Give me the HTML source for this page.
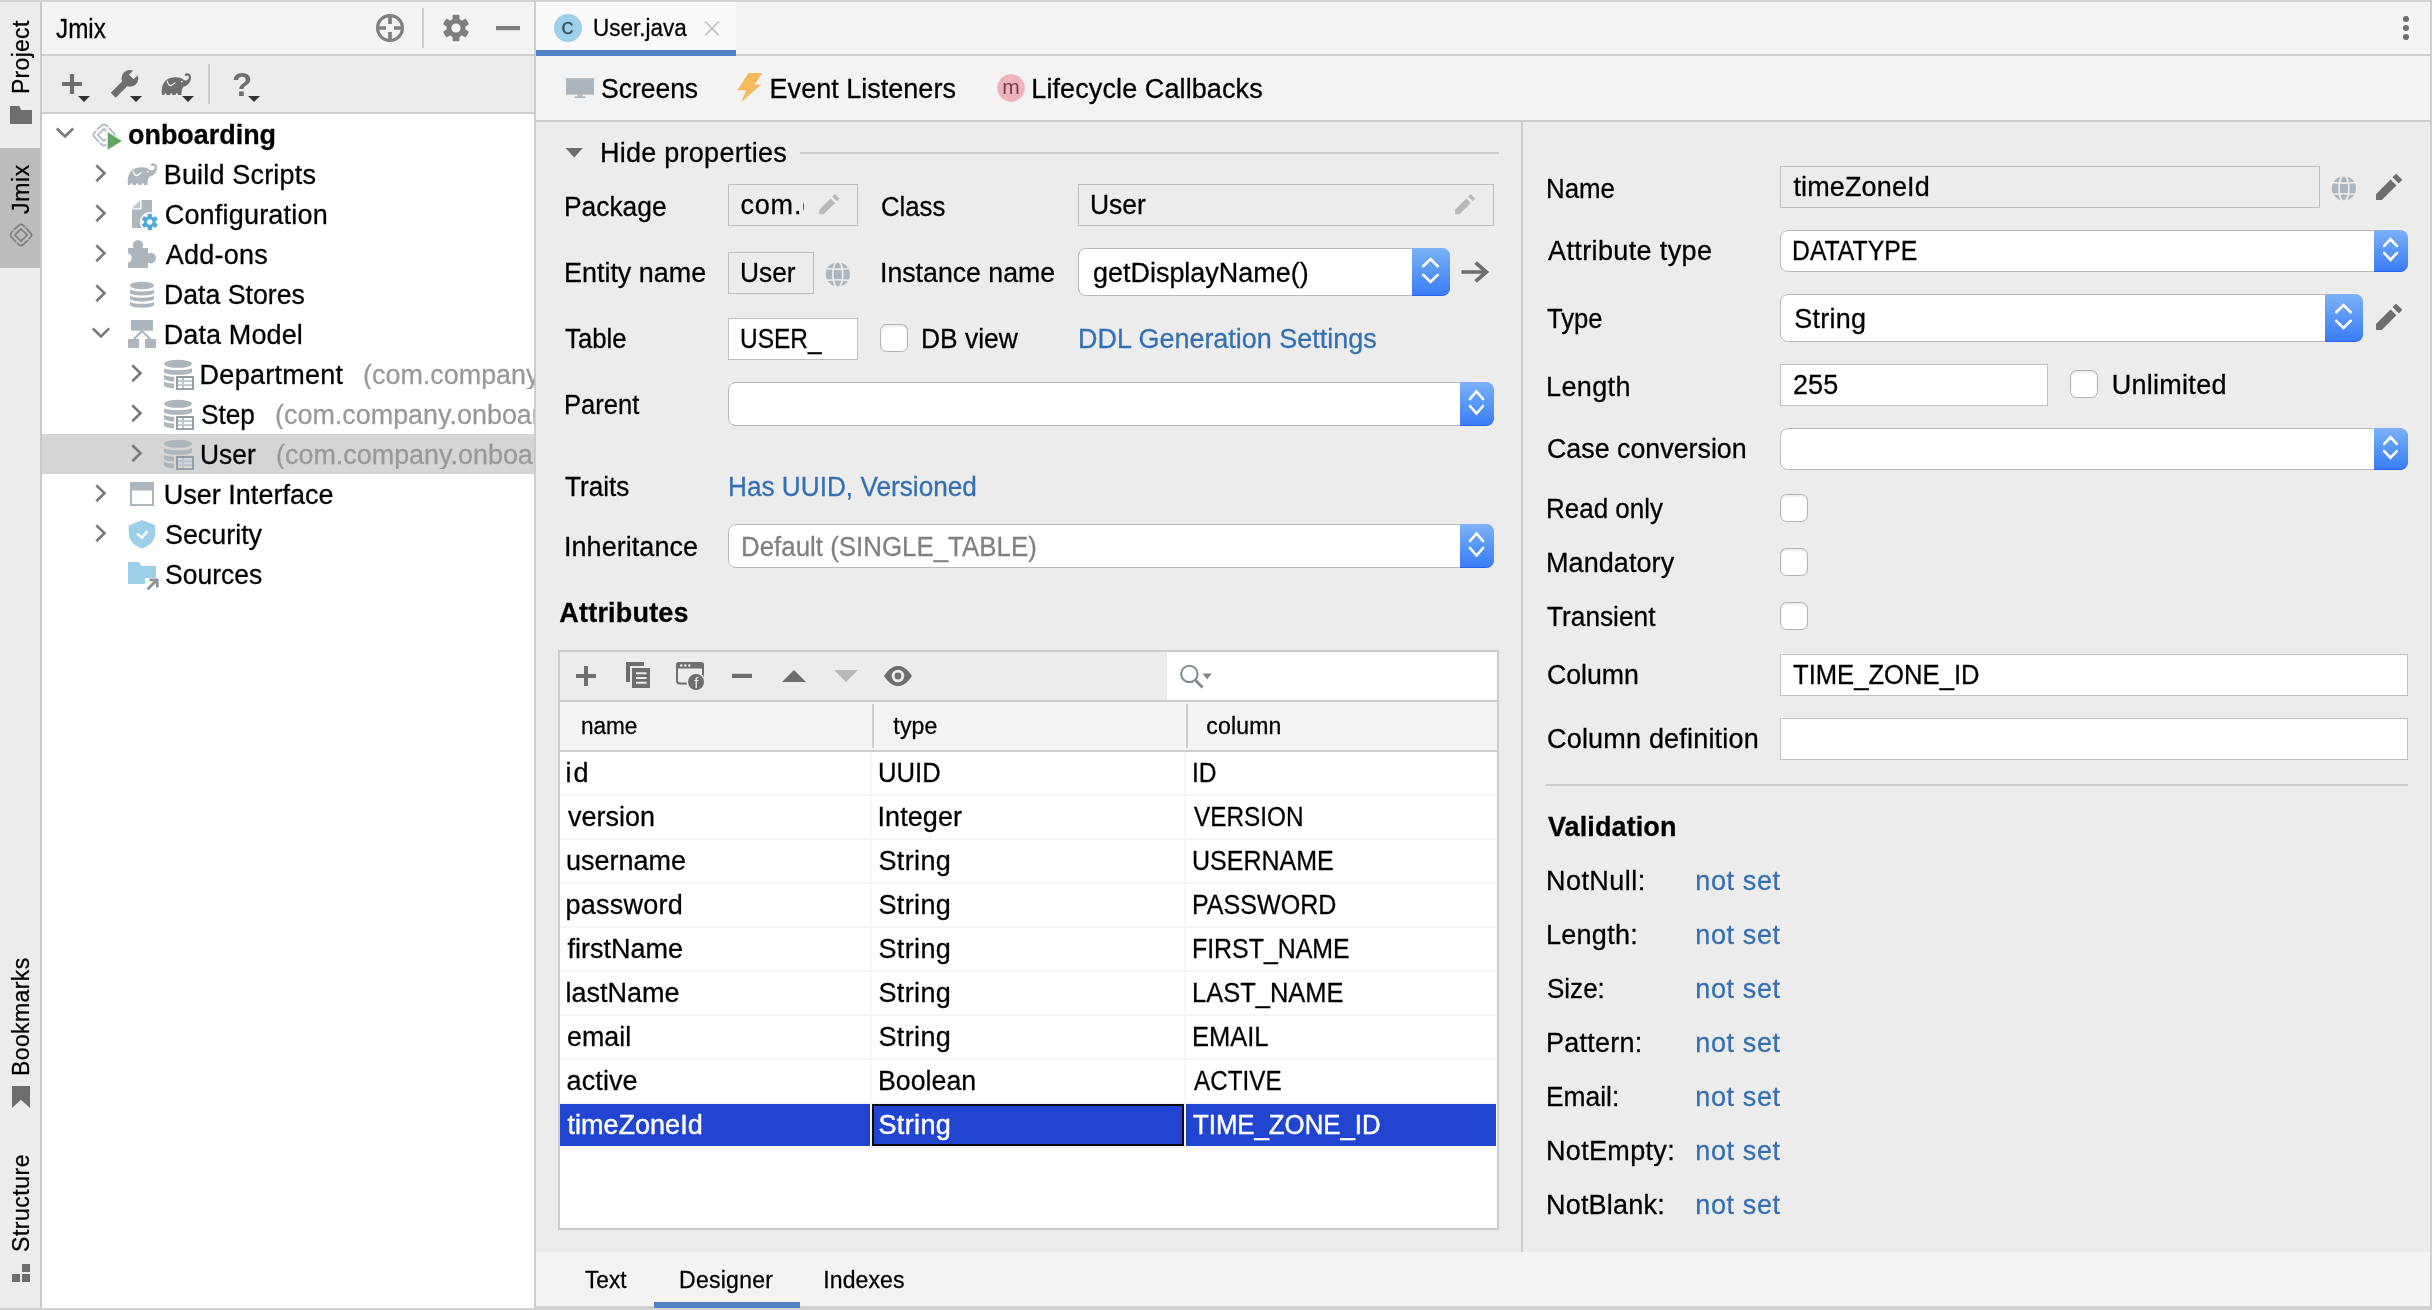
<!DOCTYPE html>
<html lang="en"><head><meta charset="utf-8"><title>User.java – Jmix Entity Designer</title>
<style>
html,body{margin:0;padding:0}
body{width:2432px;height:1310px;position:relative;overflow:hidden;background:#ececec;font-family:'Liberation Sans', sans-serif;}
#r div{position:absolute;box-sizing:border-box}
#all{will-change:transform;position:absolute;left:0;top:0;width:2432px;height:1310px}
#t span{position:absolute;white-space:pre;display:block;-webkit-text-stroke:0.28px currentColor}
svg{position:absolute;left:0;top:0}
svg text{font-family:'Liberation Sans', sans-serif}
</style></head>
<body>
<div id="all">
<div id="r">
<div style="left:0px;top:2px;width:40px;height:1306px;background:#ececec;"></div>
<div style="left:0px;top:148px;width:40px;height:120px;background:#bcbcbc;"></div>
<div style="left:40px;top:2px;width:2px;height:1306px;background:#c8c8c8;"></div>
<div style="left:42px;top:2px;width:492px;height:52px;background:#f3f3f3;"></div>
<div style="left:42px;top:54px;width:492px;height:2px;background:#cdcdcd;"></div>
<div style="left:42px;top:56px;width:492px;height:56px;background:#ececec;"></div>
<div style="left:42px;top:112px;width:492px;height:2px;background:#cdcdcd;"></div>
<div style="left:42px;top:114px;width:492px;height:1194px;background:#ffffff;"></div>
<div style="left:42px;top:434px;width:492px;height:40px;background:#d5d5d5;"></div>
<div style="left:534px;top:2px;width:2px;height:1306px;background:#cdcdcd;"></div>
<div style="left:422px;top:8px;width:2px;height:40px;background:#cdcdcd;"></div>
<div style="left:208px;top:64px;width:2px;height:40px;background:#c9c9c9;"></div>
<div style="left:536px;top:2px;width:1894px;height:52px;background:#f3f3f3;"></div>
<div style="left:536px;top:54px;width:1894px;height:2px;background:#cdcdcd;"></div>
<div style="left:536px;top:2px;width:200px;height:48px;background:#fafafa;"></div>
<div style="left:536px;top:50px;width:200px;height:6px;background:#4f81c5;"></div>
<div style="left:536px;top:56px;width:1894px;height:64px;background:#f3f3f3;"></div>
<div style="left:536px;top:120px;width:1894px;height:2px;background:#cdcdcd;"></div>
<div style="left:536px;top:122px;width:1894px;height:1130px;background:#ececec;"></div>
<div style="left:1521px;top:122px;width:2px;height:1130px;background:#cdcdcd;"></div>
<div style="left:536px;top:1252px;width:1894px;height:55px;background:#f3f3f3;"></div>
<div style="left:800px;top:152px;width:699px;height:2px;background:#cdcdcd;"></div>
<div style="left:728px;top:184px;width:130px;height:42px;background:#ececec;border:1px solid #bfbfbf;border-radius:0px;"></div>
<div style="left:1078px;top:184px;width:416px;height:42px;background:#ececec;border:1px solid #bfbfbf;border-radius:0px;"></div>
<div style="left:728px;top:252px;width:86px;height:42px;background:#ececec;border:1px solid #bfbfbf;border-radius:0px;"></div>
<div style="left:1078px;top:248px;width:372px;height:48px;background:#fff;border:1px solid #b9b9b9;border-radius:8px;"></div>
<div style="left:1412px;top:248px;width:38px;height:48px;background:linear-gradient(#7db2f6,#5b9af5 45%,#3a7df6);border-radius:0 8px 8px 0;border-bottom:1px solid #2a62f0;"></div>
<div style="left:728px;top:318px;width:130px;height:42px;background:#fff;border:1px solid #bfbfbf;border-radius:0px;"></div>
<div style="left:880px;top:324px;width:28px;height:28px;background:#fff;border:1px solid #b2b2b2;border-radius:6.5px;box-shadow:inset 0 1.5px 2px rgba(0,0,0,.10);"></div>
<div style="left:728px;top:382px;width:766px;height:44px;background:#fff;border:1px solid #b9b9b9;border-radius:8px;"></div>
<div style="left:1460px;top:382px;width:34px;height:44px;background:linear-gradient(#7db2f6,#5b9af5 45%,#3a7df6);border-radius:0 8px 8px 0;border-bottom:1px solid #2a62f0;"></div>
<div style="left:728px;top:524px;width:766px;height:44px;background:#fff;border:1px solid #b9b9b9;border-radius:8px;"></div>
<div style="left:1460px;top:524px;width:34px;height:44px;background:linear-gradient(#7db2f6,#5b9af5 45%,#3a7df6);border-radius:0 8px 8px 0;border-bottom:1px solid #2a62f0;"></div>
<div style="left:558px;top:650px;width:941px;height:580px;background:#cdcdcd;"></div>
<div style="left:560px;top:652px;width:937px;height:48px;background:#ececec;"></div>
<div style="left:1167px;top:652px;width:330px;height:48px;background:#fff;"></div>
<div style="left:560px;top:702px;width:937px;height:48px;background:#f3f3f3;"></div>
<div style="left:560px;top:752px;width:937px;height:476px;background:#fff;"></div>
<div style="left:871.5px;top:704px;width:2px;height:44px;background:#cdcdcd;"></div>
<div style="left:1185.5px;top:704px;width:2px;height:44px;background:#cdcdcd;"></div>
<div style="left:560px;top:794px;width:937px;height:2px;background:#f5f5f5;"></div>
<div style="left:560px;top:838px;width:937px;height:2px;background:#f5f5f5;"></div>
<div style="left:560px;top:882px;width:937px;height:2px;background:#f5f5f5;"></div>
<div style="left:560px;top:926px;width:937px;height:2px;background:#f5f5f5;"></div>
<div style="left:560px;top:970px;width:937px;height:2px;background:#f5f5f5;"></div>
<div style="left:560px;top:1014px;width:937px;height:2px;background:#f5f5f5;"></div>
<div style="left:560px;top:1058px;width:937px;height:2px;background:#f5f5f5;"></div>
<div style="left:560px;top:1102px;width:937px;height:2px;background:#f5f5f5;"></div>
<div style="left:560px;top:1146px;width:937px;height:2px;background:#f5f5f5;"></div>
<div style="left:869.5px;top:752px;width:2px;height:396px;background:#f5f5f5;"></div>
<div style="left:1183.5px;top:752px;width:2px;height:396px;background:#f5f5f5;"></div>
<div style="left:560px;top:1104px;width:309.5px;height:42px;background:#2145d0;"></div>
<div style="left:871.5px;top:1104px;width:312px;height:42px;background:#2145d0;border:2px solid #0a0a14;"></div>
<div style="left:1186px;top:1104px;width:310px;height:42px;background:#2145d0;"></div>
<div style="left:1780px;top:166px;width:540px;height:42px;background:#ececec;border:1px solid #bfbfbf;border-radius:0px;"></div>
<div style="left:1780px;top:230px;width:628px;height:42px;background:#fff;border:1px solid #b9b9b9;border-radius:8px;"></div>
<div style="left:2374px;top:230px;width:34px;height:42px;background:linear-gradient(#7db2f6,#5b9af5 45%,#3a7df6);border-radius:0 8px 8px 0;border-bottom:1px solid #2a62f0;"></div>
<div style="left:1780px;top:294px;width:583px;height:48px;background:#fff;border:1px solid #b9b9b9;border-radius:8px;"></div>
<div style="left:2325px;top:294px;width:38px;height:48px;background:linear-gradient(#7db2f6,#5b9af5 45%,#3a7df6);border-radius:0 8px 8px 0;border-bottom:1px solid #2a62f0;"></div>
<div style="left:1780px;top:364px;width:268px;height:42px;background:#fff;border:1px solid #bfbfbf;border-radius:0px;"></div>
<div style="left:2070px;top:370px;width:28px;height:28px;background:#fff;border:1px solid #b2b2b2;border-radius:6.5px;box-shadow:inset 0 1.5px 2px rgba(0,0,0,.10);"></div>
<div style="left:1780px;top:428px;width:628px;height:42px;background:#fff;border:1px solid #b9b9b9;border-radius:8px;"></div>
<div style="left:2374px;top:428px;width:34px;height:42px;background:linear-gradient(#7db2f6,#5b9af5 45%,#3a7df6);border-radius:0 8px 8px 0;border-bottom:1px solid #2a62f0;"></div>
<div style="left:1780px;top:494px;width:28px;height:28px;background:#fff;border:1px solid #b2b2b2;border-radius:6.5px;box-shadow:inset 0 1.5px 2px rgba(0,0,0,.10);"></div>
<div style="left:1780px;top:548px;width:28px;height:28px;background:#fff;border:1px solid #b2b2b2;border-radius:6.5px;box-shadow:inset 0 1.5px 2px rgba(0,0,0,.10);"></div>
<div style="left:1780px;top:602px;width:28px;height:28px;background:#fff;border:1px solid #b2b2b2;border-radius:6.5px;box-shadow:inset 0 1.5px 2px rgba(0,0,0,.10);"></div>
<div style="left:1780px;top:654px;width:628px;height:42px;background:#fff;border:1px solid #bfbfbf;border-radius:0px;"></div>
<div style="left:1780px;top:718px;width:628px;height:42px;background:#fff;border:1px solid #bfbfbf;border-radius:0px;"></div>
<div style="left:1546px;top:784px;width:862px;height:2px;background:#cdcdcd;"></div>
<div style="left:0px;top:0px;width:2432px;height:2px;background:#d2d2d2;"></div>
<div style="left:0px;top:1308px;width:536px;height:2px;background:#d2d2d2;"></div>
<div style="left:536px;top:1306px;width:1896px;height:4px;background:#d2d2d2;"></div>
<div style="left:2430px;top:0px;width:2px;height:1310px;background:#cfcfcf;"></div>
<div style="left:654px;top:1302px;width:146px;height:6px;background:#4f81c5;"></div>
</div>
<svg width="2432" height="1310" viewBox="0 0 2432 1310">
<path d="M1423.2 266.2 L1430.5 259.0 L1437.8 266.2 M1423.2 274.8 L1430.5 282.0 L1437.8 274.8" fill="none" stroke="#fff" stroke-width="2.6" stroke-linecap="round" stroke-linejoin="miter"/>
<path d="M1470.0 399.0 L1476.5 391.4 L1483.0 399.0 M1470.0 406.0 L1476.5 413.6 L1483.0 406.0" fill="none" stroke="#fff" stroke-width="2.6" stroke-linecap="round" stroke-linejoin="miter"/>
<path d="M1470.0 541.0 L1476.5 533.4 L1483.0 541.0 M1470.0 548.0 L1476.5 555.6 L1483.0 548.0" fill="none" stroke="#fff" stroke-width="2.6" stroke-linecap="round" stroke-linejoin="miter"/>
<path d="M2384.2 245.95 L2390.5 239.25 L2396.8 245.95 M2384.2 253.05 L2390.5 259.75 L2396.8 253.05" fill="none" stroke="#fff" stroke-width="2.6" stroke-linecap="round" stroke-linejoin="miter"/>
<path d="M2336.2 312.2 L2343.5 305.0 L2350.8 312.2 M2336.2 320.8 L2343.5 328.0 L2350.8 320.8" fill="none" stroke="#fff" stroke-width="2.6" stroke-linecap="round" stroke-linejoin="miter"/>
<path d="M2384.2 443.95 L2390.5 437.25 L2396.8 443.95 M2384.2 451.05 L2390.5 457.75 L2396.8 451.05" fill="none" stroke="#fff" stroke-width="2.6" stroke-linecap="round" stroke-linejoin="miter"/>
<path d="M10 106 H19.2 L21.2 110 H32 V124 H10 Z" fill="#6e6e6e"/>
<g fill="none" stroke="#808080" stroke-width="1.7" stroke-linecap="round" stroke-linejoin="round" transform="translate(21 235)"><path d="M-6.5 -5.8 L-1.7 -10 Q0 -11.2 1.7 -10 L3.6 -8.4"/><path d="M5.3 -6.7 L10 -1.7 Q11.2 0 10 1.7 L8.2 3.7"/><path d="M6.5 5.6 L1.7 10 Q0 11.2 -1.7 10 L-3.6 8.4"/><path d="M-5.3 6.7 L-10 1.7 Q-11.2 0 -10 -1.7 L-8.2 -3.7"/><path d="M0 -6.2 L6.2 0 L0 6.2 L-6.2 0 Z"/></g>
<path d="M12 1086 H30 V1108 L21 1099.8 L12 1108 Z" fill="#6e6e6e"/>
<rect x="22" y="1264" width="8" height="8" fill="#6e6e6e"/><rect x="12" y="1274" width="8" height="8" fill="#6e6e6e"/><rect x="22" y="1274" width="8" height="8" fill="#6e6e6e"/>
<g fill="none" stroke="#7f7f7f"><circle cx="390" cy="28" r="12.4" stroke-width="3.2"/><path d="M390 15 V24 M390 32 V41 M377 28 H386 M394 28 H403" stroke-width="3.7"/></g>
<g transform="translate(456 28)">
<rect x="-3.43" y="-13.20" width="6.86" height="13.20" rx="1" fill="#7f7f7f" transform="rotate(0.0)"/>
<rect x="-3.43" y="-13.20" width="6.86" height="13.20" rx="1" fill="#7f7f7f" transform="rotate(60.0)"/>
<rect x="-3.43" y="-13.20" width="6.86" height="13.20" rx="1" fill="#7f7f7f" transform="rotate(120.0)"/>
<rect x="-3.43" y="-13.20" width="6.86" height="13.20" rx="1" fill="#7f7f7f" transform="rotate(180.0)"/>
<rect x="-3.43" y="-13.20" width="6.86" height="13.20" rx="1" fill="#7f7f7f" transform="rotate(240.0)"/>
<rect x="-3.43" y="-13.20" width="6.86" height="13.20" rx="1" fill="#7f7f7f" transform="rotate(300.0)"/>
<circle r="9.6" fill="#7f7f7f"/><circle r="4.6" fill="#f3f3f3"/></g>
<rect x="496" y="26" width="24" height="4.2" fill="#7f7f7f"/>
<path d="M62 84 H82 M72 74 V94" stroke="#6e6e6e" stroke-width="4.2" fill="none"/>
<path d="M78 96 h12 l-6.0 6 Z" fill="#333"/>
<path d="M113.2 95.3 L126.5 82" stroke="#6e6e6e" stroke-width="7" fill="none"/><circle cx="129.9" cy="78.4" r="8.4" fill="#6e6e6e"/><rect x="-3.3" y="-13" width="6.6" height="12.4" fill="#ececec" transform="translate(130.9 77.4) rotate(45)"/>
<path d="M130 96 h12 l-6.0 6 Z" fill="#333"/>
<g transform="translate(161 73)"><path d="M1 22 C-0.5 12 4 5 12 4.5 C16 4 20 4.3 22.5 6.8 C25 8.6 27.6 7 27.8 4.6 C28 2.6 26.2 2 25.2 3.2 L23.4 2 C24.6 -0.6 30 -0.4 30 4.6 C30 9 27 12.6 23.2 13.6 C21.6 14.2 20.6 16 20.6 22 L17 22 C17 19.8 14.6 19.8 14.6 22 L11.4 22 C11.4 19.8 9 19.8 9 22 L5.6 22 C5.6 19.8 3.4 19.8 3.2 22 Z" fill="#6e6e6e"/><path d="M6.2 8 C7 11.5 8.6 12.6 10 12.6 L14.2 9.8" fill="none" stroke="#ececec" stroke-width="1.2" stroke-linecap="round"/><circle cx="20.8" cy="8.6" r="0.9" fill="#ececec"/></g>
<path d="M182 96 h12 l-6.0 6 Z" fill="#333"/>
<text x="242" y="96" font-size="33" font-weight="700" fill="#6e6e6e" text-anchor="middle">?</text>
<path d="M248 96 h12 l-6.0 6 Z" fill="#333"/>
<path d="M56.8 128.5 L65 136.5 L73.2 128.5" fill="none" stroke="#7a7a7a" stroke-width="2.6"/>
<path d="M96.3 165.2 L104.5 173.2 L96.3 181.2" fill="none" stroke="#7a7a7a" stroke-width="2.6"/>
<path d="M96.3 205.2 L104.5 213.2 L96.3 221.2" fill="none" stroke="#7a7a7a" stroke-width="2.6"/>
<path d="M96.3 245.2 L104.5 253.2 L96.3 261.2" fill="none" stroke="#7a7a7a" stroke-width="2.6"/>
<path d="M96.3 285.2 L104.5 293.2 L96.3 301.2" fill="none" stroke="#7a7a7a" stroke-width="2.6"/>
<path d="M96.3 485.2 L104.5 493.2 L96.3 501.2" fill="none" stroke="#7a7a7a" stroke-width="2.6"/>
<path d="M96.3 525.2 L104.5 533.2 L96.3 541.2" fill="none" stroke="#7a7a7a" stroke-width="2.6"/>
<path d="M92.8 328.4 L101 336.4 L109.2 328.4" fill="none" stroke="#7a7a7a" stroke-width="2.6"/>
<path d="M132.3 365.2 L140.5 373.2 L132.3 381.2" fill="none" stroke="#7a7a7a" stroke-width="2.6"/>
<path d="M132.3 405.2 L140.5 413.2 L132.3 421.2" fill="none" stroke="#7a7a7a" stroke-width="2.6"/>
<path d="M132.3 445.2 L140.5 453.2 L132.3 461.2" fill="none" stroke="#7a7a7a" stroke-width="2.6"/>
<g fill="none" stroke="#aeb8c0" stroke-width="1.7" stroke-linecap="round" stroke-linejoin="round" transform="translate(104 135)"><path d="M-6.5 -5.8 L-1.7 -10 Q0 -11.2 1.7 -10 L3.6 -8.4"/><path d="M5.3 -6.7 L10 -1.7 Q11.2 0 10 1.7 L8.2 3.7"/><path d="M6.5 5.6 L1.7 10 Q0 11.2 -1.7 10 L-3.6 8.4"/><path d="M-5.3 6.7 L-10 1.7 Q-11.2 0 -10 -1.7 L-8.2 -3.7"/><path d="M0 -6.2 L6.2 0 L0 6.2 L-6.2 0 Z"/></g>
<path d="M106.2 130.6 L123 141 L106.2 151.2 Z" fill="#fff"/>
<path d="M107.7 132.2 L121.8 141 L107.7 149.8 Z" fill="#62a562"/>
<g transform="translate(127 163)"><path d="M1 22 C-0.5 12 4 5 12 4.5 C16 4 20 4.3 22.5 6.8 C25 8.6 27.6 7 27.8 4.6 C28 2.6 26.2 2 25.2 3.2 L23.4 2 C24.6 -0.6 30 -0.4 30 4.6 C30 9 27 12.6 23.2 13.6 C21.6 14.2 20.6 16 20.6 22 L17 22 C17 19.8 14.6 19.8 14.6 22 L11.4 22 C11.4 19.8 9 19.8 9 22 L5.6 22 C5.6 19.8 3.4 19.8 3.2 22 Z" fill="#aeb6bd"/><path d="M6.2 8 C7 11.5 8.6 12.6 10 12.6 L14.2 9.8" fill="none" stroke="#fff" stroke-width="1.2" stroke-linecap="round"/><circle cx="20.8" cy="8.6" r="0.9" fill="#fff"/></g>
<path d="M141.5 200 H152 V228 H132 V209.5 H141.5 Z" fill="#aeb6bd"/><path d="M132 208.2 L140.2 200 V208.2 Z" fill="#aeb6bd" opacity=".75"/>
<circle cx="149.8" cy="222" r="10" fill="#fff"/>
<g transform="translate(149.8 222)">
<rect x="-2.13" y="-8.20" width="4.26" height="8.20" rx="1" fill="#4fa8dd" transform="rotate(0.0)"/>
<rect x="-2.13" y="-8.20" width="4.26" height="8.20" rx="1" fill="#4fa8dd" transform="rotate(60.0)"/>
<rect x="-2.13" y="-8.20" width="4.26" height="8.20" rx="1" fill="#4fa8dd" transform="rotate(120.0)"/>
<rect x="-2.13" y="-8.20" width="4.26" height="8.20" rx="1" fill="#4fa8dd" transform="rotate(180.0)"/>
<rect x="-2.13" y="-8.20" width="4.26" height="8.20" rx="1" fill="#4fa8dd" transform="rotate(240.0)"/>
<rect x="-2.13" y="-8.20" width="4.26" height="8.20" rx="1" fill="#4fa8dd" transform="rotate(300.0)"/>
<circle r="5.8" fill="#4fa8dd"/><circle r="2.7" fill="#fff"/></g>
<g fill="#aeb6bd"><path d="M128 248 H148 V268 H128 V262.5 A4.6 4.6 0 0 0 128 253.5 Z"/><circle cx="138" cy="245.2" r="5.2"/><circle cx="150.8" cy="258" r="5.2"/></g>
<ellipse cx="142.0" cy="285.5" rx="12.0" ry="3.75" fill="#aeb6bd"/>
<path d="M130 289.2 A12.0 2.33 0 0 0 154 289.2 V292.8 A12.0 2.70 0 0 1 130 292.8 Z" fill="#aeb6bd"/>
<path d="M130 295.34999999999997 A12.0 2.33 0 0 0 154 295.34999999999997 V298.95 A12.0 2.70 0 0 1 130 298.95 Z" fill="#aeb6bd"/>
<path d="M130 301.5 A12.0 2.33 0 0 0 154 301.5 V305.1 A12.0 2.70 0 0 1 130 305.1 Z" fill="#aeb6bd"/>
<g fill="#aeb6bd"><rect x="131" y="320" width="22" height="10.7"/><rect x="128" y="339" width="11" height="9"/><rect x="145" y="339" width="11" height="9"/></g><path d="M142 331 L133.5 339.5 M142 331 L150.5 339.5" stroke="#aeb6bd" stroke-width="2" fill="none"/>
<ellipse cx="178.0" cy="363.8" rx="14.0" ry="4" fill="#aeb6bd"/>
<path d="M164 367.8 A14.0 2.48 0 0 0 192 367.8 V371.90000000000003 A14.0 2.88 0 0 1 164 371.90000000000003 Z" fill="#aeb6bd"/>
<path d="M164 374.55 A14.0 2.48 0 0 0 192 374.55 V378.65000000000003 A14.0 2.88 0 0 1 164 378.65000000000003 Z" fill="#aeb6bd"/>
<path d="M164 381.3 A14.0 2.48 0 0 0 192 381.3 V385.40000000000003 A14.0 2.88 0 0 1 164 385.40000000000003 Z" fill="#aeb6bd"/>
<rect x="174" y="375.2" width="21" height="16" fill="#fff"/>
<rect x="176" y="376" width="18" height="14" fill="#929fa9"/>
<rect x="178" y="378" width="14" height="10" fill="#bcc4ca"/>
<rect x="178" y="378.1" width="4" height="2.1" fill="#fff"/><rect x="183.9" y="378.1" width="8.1" height="2.1" fill="#fff"/>
<rect x="178" y="382.05" width="4" height="2.1" fill="#fff"/><rect x="183.9" y="382.05" width="8.1" height="2.1" fill="#fff"/>
<rect x="178" y="386.0" width="4" height="2.1" fill="#fff"/><rect x="183.9" y="386.0" width="8.1" height="2.1" fill="#fff"/>
<ellipse cx="178.0" cy="403.8" rx="14.0" ry="4" fill="#aeb6bd"/>
<path d="M164 407.8 A14.0 2.48 0 0 0 192 407.8 V411.90000000000003 A14.0 2.88 0 0 1 164 411.90000000000003 Z" fill="#aeb6bd"/>
<path d="M164 414.55 A14.0 2.48 0 0 0 192 414.55 V418.65000000000003 A14.0 2.88 0 0 1 164 418.65000000000003 Z" fill="#aeb6bd"/>
<path d="M164 421.3 A14.0 2.48 0 0 0 192 421.3 V425.40000000000003 A14.0 2.88 0 0 1 164 425.40000000000003 Z" fill="#aeb6bd"/>
<rect x="174" y="415.2" width="21" height="16" fill="#fff"/>
<rect x="176" y="416" width="18" height="14" fill="#929fa9"/>
<rect x="178" y="418" width="14" height="10" fill="#bcc4ca"/>
<rect x="178" y="418.1" width="4" height="2.1" fill="#fff"/><rect x="183.9" y="418.1" width="8.1" height="2.1" fill="#fff"/>
<rect x="178" y="422.05" width="4" height="2.1" fill="#fff"/><rect x="183.9" y="422.05" width="8.1" height="2.1" fill="#fff"/>
<rect x="178" y="426.0" width="4" height="2.1" fill="#fff"/><rect x="183.9" y="426.0" width="8.1" height="2.1" fill="#fff"/>
<ellipse cx="178.0" cy="443.8" rx="14.0" ry="4" fill="#aeb6bd"/>
<path d="M164 447.8 A14.0 2.48 0 0 0 192 447.8 V451.90000000000003 A14.0 2.88 0 0 1 164 451.90000000000003 Z" fill="#aeb6bd"/>
<path d="M164 454.55 A14.0 2.48 0 0 0 192 454.55 V458.65000000000003 A14.0 2.88 0 0 1 164 458.65000000000003 Z" fill="#aeb6bd"/>
<path d="M164 461.3 A14.0 2.48 0 0 0 192 461.3 V465.40000000000003 A14.0 2.88 0 0 1 164 465.40000000000003 Z" fill="#aeb6bd"/>
<rect x="174" y="455.2" width="21" height="16" fill="#d5d5d5"/>
<rect x="176" y="456" width="18" height="14" fill="#929fa9"/>
<rect x="178" y="458" width="14" height="10" fill="#bcc4ca"/>
<rect x="178" y="458.1" width="4" height="2.1" fill="#d5d5d5"/><rect x="183.9" y="458.1" width="8.1" height="2.1" fill="#d5d5d5"/>
<rect x="178" y="462.05" width="4" height="2.1" fill="#d5d5d5"/><rect x="183.9" y="462.05" width="8.1" height="2.1" fill="#d5d5d5"/>
<rect x="178" y="466.0" width="4" height="2.1" fill="#d5d5d5"/><rect x="183.9" y="466.0" width="8.1" height="2.1" fill="#d5d5d5"/>
<rect x="131" y="483" width="22" height="22" fill="#fff" stroke="#aeb6bd" stroke-width="2"/><rect x="130" y="482" width="24" height="8.5" fill="#aeb6bd"/>
<path d="M142 520 L155.3 525.2 V533 C155.3 541 149 546.4 142 548.4 C135 546.4 128.8 541 128.8 533 V525.2 Z" fill="#9dcfe8"/><path d="M137.3 533.6 L141.9 537.8 L147.4 531" fill="none" stroke="#fff" stroke-width="2.5"/>
<path d="M128 562 H138.5 L141.8 566 H156 V584 H128 Z" fill="#9dcfe8"/>
<path d="M145 578 H160 V592 H145 Z" fill="#fff"/>
<path d="M147.6 589.2 L156 580.8 M149.6 579.8 H157.2 V587.4" fill="none" stroke="#8b9299" stroke-width="2.8"/>
<circle cx="568" cy="28" r="14" fill="#9bd0e8"/><text x="567.6" y="33.8" font-size="16" fill="#3b5260" stroke="#3b5260" stroke-width=".5" text-anchor="middle">C</text>
<path d="M705 21.3 L719 35.3 M719 21.3 L705 35.3" stroke="#bfc4c8" stroke-width="1.7" fill="none"/>
<circle cx="2406" cy="19" r="3" fill="#6e6e6e"/><circle cx="2406" cy="28" r="3" fill="#6e6e6e"/><circle cx="2406" cy="37" r="3" fill="#6e6e6e"/>
<rect x="566" y="78.2" width="28" height="16.5" fill="#aeb6bd"/><rect x="577.5" y="94.5" width="5" height="3" fill="#aeb6bd"/><rect x="574.5" y="96.4" width="11" height="1.6" fill="#aeb6bd"/>
<path d="M748.5 73 L762.3 73 L754.5 84.6 L761.5 84.6 L741.3 102 L746.2 90.2 L737.3 90.2 Z" fill="#f2bb5e"/>
<circle cx="1011" cy="88" r="13.8" fill="#f0b3bd"/><text x="1011" y="93.6" font-size="21" fill="#7a3a47" text-anchor="middle">m</text>
<path d="M565.5 148 H582.8 L574.15 157.6 Z" fill="#6e6e6e"/>
<polygon points="819.30,214.20 819.30,209.71 830.62,198.39 835.11,202.88 823.79,214.20" fill="#b7b9bb"/><polygon points="832.76,196.55 834.91,194.41 839.09,198.59 836.95,200.74" fill="#b7b9bb" stroke="#b7b9bb" stroke-width="0.92" stroke-linejoin="round"/>
<polygon points="1455.00,214.20 1455.00,209.71 1466.32,198.39 1470.81,202.88 1459.49,214.20" fill="#b7b9bb"/><polygon points="1468.46,196.55 1470.61,194.41 1474.79,198.59 1472.65,200.74" fill="#b7b9bb" stroke="#b7b9bb" stroke-width="0.92" stroke-linejoin="round"/>
<polygon points="2376.00,200.00 2376.00,194.21 2390.60,179.62 2396.38,185.40 2381.79,200.00" fill="#6e6e6e"/><polygon points="2393.36,177.25 2396.12,174.49 2401.51,179.88 2398.75,182.64" fill="#6e6e6e" stroke="#6e6e6e" stroke-width="1.18" stroke-linejoin="round"/>
<polygon points="2376.00,329.90 2376.00,324.11 2390.60,309.52 2396.38,315.30 2381.79,329.90" fill="#6e6e6e"/><polygon points="2393.36,307.15 2396.12,304.39 2401.51,309.78 2398.75,312.54" fill="#6e6e6e" stroke="#6e6e6e" stroke-width="1.18" stroke-linejoin="round"/>
<circle cx="837.8" cy="274.4" r="12.1" fill="#aeb6bd"/><g fill="none" stroke="#ececec" stroke-width="1.7"><path d="M825.6999999999999 268.471 Q837.8 269.671 849.9 268.471 M825.6999999999999 280.32899999999995 Q837.8 279.12899999999996 849.9 280.32899999999995"/><ellipse cx="837.8" cy="274.4" rx="4.96" ry="13.1"/></g>
<circle cx="2343.9" cy="188.4" r="12.1" fill="#aeb6bd"/><g fill="none" stroke="#ececec" stroke-width="1.7"><path d="M2331.8 182.471 Q2343.9 183.671 2356.0 182.471 M2331.8 194.329 Q2343.9 193.12900000000002 2356.0 194.329"/><ellipse cx="2343.9" cy="188.4" rx="4.96" ry="13.1"/></g>
<path d="M1461.5 272 H1485.5 M1475.6 262.6 L1486.4 272 L1475.6 281.4" fill="none" stroke="#6e6e6e" stroke-width="3.7"/>
<path d="M576 676 H596 M586 666 V686" stroke="#6e6e6e" stroke-width="4" fill="none"/>
<path d="M626 682 V662 H644 V666 H630 V682 Z" fill="#6e6e6e"/><rect x="632" y="668" width="18" height="20" fill="#6e6e6e"/><path d="M636 673.2 H646.5 M636 678 H646.5 M636 682.8 H646.5" stroke="#ececec" stroke-width="2" fill="none"/>
<rect x="677" y="663" width="26" height="20.5" rx="3" fill="none" stroke="#6e6e6e" stroke-width="2"/><path d="M676 668.6 V665 a3 3 0 0 1 3 -3 h22 a3 3 0 0 1 3 3 V668.6 Z" fill="#6e6e6e"/><circle cx="681.3" cy="665.5" r="1.2" fill="#ececec"/><circle cx="685.3" cy="665.5" r="1.2" fill="#ececec"/><circle cx="689.3" cy="665.5" r="1.2" fill="#ececec"/><circle cx="696" cy="682" r="9.4" fill="#ececec"/><circle cx="696" cy="682" r="8" fill="#6e6e6e"/><text x="696.3" y="687.6" font-size="15" fill="#ececec" text-anchor="middle">f</text>
<rect x="732" y="673.8" width="20" height="4.2" fill="#6e6e6e"/>
<path d="M782 682 L794 670 L806 682 Z" fill="#6e6e6e"/>
<path d="M834 670 L858 670 L846 682 Z" fill="#b9b9b9"/>
<path d="M884 676 C889 668.5 893.5 666 898 666 C902.5 666 907 668.5 912 676 C907 683.5 902.5 686 898 686 C893.5 686 889 683.5 884 676 Z" fill="#6e6e6e"/><circle cx="898" cy="676" r="6.3" fill="#ececec"/><circle cx="898" cy="676" r="3.4" fill="#6e6e6e"/>
<circle cx="1189.4" cy="673.9" r="8.2" fill="none" stroke="#7f8b91" stroke-width="2"/><path d="M1195.4 680.2 L1202.6 687.4" stroke="#7f8b91" stroke-width="2.8" fill="none"/><path d="M1202.5 673.6 H1211.8 L1207.15 679.4 Z" fill="#7f8b91"/>
</svg>
<div id="t">
<span style="font-size:23px;line-height:23px;color:#000;letter-spacing:0.283px;left:9.60px;top:94.40px;transform-origin:0 0;transform:rotate(-90deg);">Project</span>
<span style="font-size:23px;line-height:23px;color:#000;letter-spacing:0.700px;left:9.60px;top:213.80px;transform-origin:0 0;transform:rotate(-90deg);">Jmix</span>
<span style="font-size:23px;line-height:23px;color:#000;letter-spacing:0.388px;left:9.60px;top:1076.40px;transform-origin:0 0;transform:rotate(-90deg);">Bookmarks</span>
<span style="font-size:23px;line-height:23px;color:#000;letter-spacing:0.537px;left:9.60px;top:1251.60px;transform-origin:0 0;transform:rotate(-90deg);">Structure</span>
<span style="font-size:27px;line-height:27px;color:#000;left:56.00px;top:16.00px;transform-origin:0 0;transform:scaleX(0.8982);">Jmix</span>
<span style="font-size:27px;line-height:27px;color:#000;font-weight:700;left:128.00px;top:122.00px;transform-origin:0 0;transform:scaleX(0.9973);">onboarding</span>
<span style="font-size:27px;line-height:27px;color:#000;letter-spacing:0.183px;left:163.70px;top:162.00px;">Build Scripts</span>
<span style="font-size:27px;line-height:27px;color:#000;letter-spacing:0.200px;left:164.70px;top:202.00px;">Configuration</span>
<span style="font-size:27px;line-height:27px;color:#000;letter-spacing:0.250px;left:165.70px;top:242.00px;">Add-ons</span>
<span style="font-size:27px;line-height:27px;color:#000;left:163.72px;top:282.00px;transform-origin:0 0;transform:scaleX(0.9879);">Data Stores</span>
<span style="font-size:27px;line-height:27px;color:#000;letter-spacing:0.111px;left:163.70px;top:322.00px;">Data Model</span>
<span style="font-size:27px;line-height:27px;color:#000;letter-spacing:0.267px;left:199.60px;top:362.00px;">Department</span>
<span style="font-size:27px;line-height:27px;color:#999;left:363.01px;top:362.00px;transform-origin:0 0;transform:scaleX(0.9969);width:171.53px;overflow:hidden;">(com.company.onboarding.entity)</span>
<span style="font-size:27px;line-height:27px;color:#000;left:200.63px;top:402.00px;transform-origin:0 0;transform:scaleX(0.9704);">Step</span>
<span style="font-size:27px;line-height:27px;color:#999;left:275.21px;top:402.00px;transform-origin:0 0;transform:scaleX(0.9969);width:259.61px;overflow:hidden;">(com.company.onboarding.entity)</span>
<span style="font-size:27px;line-height:27px;color:#000;left:199.65px;top:442.00px;transform-origin:0 0;transform:scaleX(0.9764);">User</span>
<span style="font-size:27px;line-height:27px;color:#999;left:275.81px;top:442.00px;transform-origin:0 0;transform:scaleX(0.9969);width:259.00px;overflow:hidden;">(com.company.onboarding.entity)</span>
<span style="font-size:27px;line-height:27px;color:#000;letter-spacing:0.023px;left:163.70px;top:482.00px;">User Interface</span>
<span style="font-size:27px;line-height:27px;color:#000;left:164.71px;top:522.00px;transform-origin:0 0;transform:scaleX(0.9948);">Security</span>
<span style="font-size:27px;line-height:27px;color:#000;left:164.72px;top:562.00px;transform-origin:0 0;transform:scaleX(0.9814);">Sources</span>
<span style="font-size:23px;line-height:23px;color:#000;left:592.54px;top:17.00px;transform-origin:0 0;transform:scaleX(0.9777);">User.java</span>
<span style="font-size:27px;line-height:27px;color:#000;left:600.52px;top:76.00px;transform-origin:0 0;transform:scaleX(0.9804);">Screens</span>
<span style="font-size:27px;line-height:27px;color:#000;letter-spacing:0.014px;left:769.60px;top:76.00px;">Event Listeners</span>
<span style="font-size:27px;line-height:27px;color:#000;letter-spacing:0.100px;left:1031.30px;top:76.00px;">Lifecycle Callbacks</span>
<span style="font-size:27px;line-height:27px;color:#000;letter-spacing:0.257px;left:600.00px;top:140.00px;">Hide properties</span>
<span style="font-size:27px;line-height:27px;color:#000;left:564.05px;top:194.00px;transform-origin:0 0;transform:scaleX(0.9765);">Package</span>
<span style="font-size:27px;line-height:27px;color:#000;letter-spacing:0.800px;left:740.50px;top:192.00px;width:63.90px;overflow:hidden;">com.company.onboarding.entity</span>
<span style="font-size:27px;line-height:27px;color:#000;left:880.55px;top:194.00px;transform-origin:0 0;transform:scaleX(0.9530);">Class</span>
<span style="font-size:27px;line-height:27px;color:#000;left:1089.54px;top:192.00px;transform-origin:0 0;transform:scaleX(0.9800);">User</span>
<span style="font-size:27px;line-height:27px;color:#000;left:564.01px;top:260.00px;transform-origin:0 0;transform:scaleX(0.9971);">Entity name</span>
<span style="font-size:27px;line-height:27px;color:#000;left:740.05px;top:260.00px;transform-origin:0 0;transform:scaleX(0.9745);">User</span>
<span style="font-size:27px;line-height:27px;color:#000;left:879.52px;top:260.00px;transform-origin:0 0;transform:scaleX(0.9891);">Instance name</span>
<span style="font-size:27px;line-height:27px;color:#000;left:1092.50px;top:260.00px;transform-origin:0 0;transform:scaleX(0.9981);">getDisplayName()</span>
<span style="font-size:27px;line-height:27px;color:#000;left:565.05px;top:326.00px;transform-origin:0 0;transform:scaleX(0.9540);">Table</span>
<span style="font-size:27px;line-height:27px;color:#000;left:740.19px;top:326.00px;transform-origin:0 0;transform:scaleX(0.9056);">USER_</span>
<span style="font-size:27px;line-height:27px;color:#000;left:921.35px;top:326.00px;transform-origin:0 0;transform:scaleX(0.9773);">DB view</span>
<span style="font-size:27px;line-height:27px;color:#356fb3;left:1077.80px;top:326.00px;transform-origin:0 0;transform:scaleX(0.9986);">DDL Generation Settings</span>
<span style="font-size:27px;line-height:27px;color:#000;left:564.11px;top:392.00px;transform-origin:0 0;transform:scaleX(0.9474);">Parent</span>
<span style="font-size:27px;line-height:27px;color:#000;left:565.03px;top:474.00px;transform-origin:0 0;transform:scaleX(0.9677);">Traits</span>
<span style="font-size:27px;line-height:27px;color:#356fb3;left:727.56px;top:474.00px;transform-origin:0 0;transform:scaleX(0.9700);">Has UUID, Versioned</span>
<span style="font-size:27px;line-height:27px;color:#000;letter-spacing:0.040px;left:564.00px;top:534.00px;">Inheritance</span>
<span style="font-size:27px;line-height:27px;color:#808080;left:741.38px;top:534.00px;transform-origin:0 0;transform:scaleX(0.9584);">Default (SINGLE_TABLE)</span>
<span style="font-size:27px;line-height:27px;color:#000;letter-spacing:0.200px;font-weight:700;left:559.30px;top:600.00px;">Attributes</span>
<span style="font-size:23px;line-height:23px;color:#000;left:580.52px;top:715.00px;transform-origin:0 0;transform:scaleX(0.9804);">name</span>
<span style="font-size:23px;line-height:23px;color:#000;letter-spacing:0.200px;left:893.30px;top:715.00px;">type</span>
<span style="font-size:23px;line-height:23px;color:#000;letter-spacing:0.160px;left:1206.30px;top:715.00px;">column</span>
<span style="font-size:27px;line-height:27px;color:#000;letter-spacing:1.900px;left:565.50px;top:760.00px;">id</span>
<span style="font-size:27px;line-height:27px;color:#000;left:877.60px;top:760.00px;transform-origin:0 0;transform:scaleX(0.9508);">UUID</span>
<span style="font-size:27px;line-height:27px;color:#000;left:1192.17px;top:760.00px;transform-origin:0 0;transform:scaleX(0.9125);">ID</span>
<span style="font-size:27px;line-height:27px;color:#000;left:567.50px;top:804.00px;transform-origin:0 0;transform:scaleX(0.9988);">version</span>
<span style="font-size:27px;line-height:27px;color:#000;letter-spacing:0.067px;left:877.50px;top:804.00px;">Integer</span>
<span style="font-size:27px;line-height:27px;color:#000;left:1194.00px;top:804.00px;transform-origin:0 0;transform:scaleX(0.9008);">VERSION</span>
<span style="font-size:27px;line-height:27px;color:#000;left:565.50px;top:848.00px;transform-origin:0 0;transform:scaleX(0.9991);">username</span>
<span style="font-size:27px;line-height:27px;color:#000;letter-spacing:0.360px;left:878.50px;top:848.00px;">String</span>
<span style="font-size:27px;line-height:27px;color:#000;left:1192.15px;top:848.00px;transform-origin:0 0;transform:scaleX(0.9260);">USERNAME</span>
<span style="font-size:27px;line-height:27px;color:#000;letter-spacing:0.229px;left:565.50px;top:892.00px;">password</span>
<span style="font-size:27px;line-height:27px;color:#000;letter-spacing:0.360px;left:878.50px;top:892.00px;">String</span>
<span style="font-size:27px;line-height:27px;color:#000;left:1192.14px;top:892.00px;transform-origin:0 0;transform:scaleX(0.9283);">PASSWORD</span>
<span style="font-size:27px;line-height:27px;color:#000;letter-spacing:0.013px;left:567.50px;top:936.00px;">firstName</span>
<span style="font-size:27px;line-height:27px;color:#000;letter-spacing:0.360px;left:878.50px;top:936.00px;">String</span>
<span style="font-size:27px;line-height:27px;color:#000;left:1192.16px;top:936.00px;transform-origin:0 0;transform:scaleX(0.9220);">FIRST_NAME</span>
<span style="font-size:27px;line-height:27px;color:#000;letter-spacing:0.014px;left:565.50px;top:980.00px;">lastName</span>
<span style="font-size:27px;line-height:27px;color:#000;letter-spacing:0.360px;left:878.50px;top:980.00px;">String</span>
<span style="font-size:27px;line-height:27px;color:#000;left:1192.11px;top:980.00px;transform-origin:0 0;transform:scaleX(0.9437);">LAST_NAME</span>
<span style="font-size:27px;line-height:27px;color:#000;left:566.51px;top:1024.00px;transform-origin:0 0;transform:scaleX(0.9935);">email</span>
<span style="font-size:27px;line-height:27px;color:#000;letter-spacing:0.360px;left:878.50px;top:1024.00px;">String</span>
<span style="font-size:27px;line-height:27px;color:#000;left:1192.11px;top:1024.00px;transform-origin:0 0;transform:scaleX(0.9436);">EMAIL</span>
<span style="font-size:27px;line-height:27px;color:#000;letter-spacing:0.120px;left:566.50px;top:1068.00px;">active</span>
<span style="font-size:27px;line-height:27px;color:#000;left:877.52px;top:1068.00px;transform-origin:0 0;transform:scaleX(0.9905);">Boolean</span>
<span style="font-size:27px;line-height:27px;color:#000;left:1194.00px;top:1068.00px;transform-origin:0 0;transform:scaleX(0.8979);">ACTIVE</span>
<span style="font-size:27px;line-height:27px;color:#fff;letter-spacing:0.011px;-webkit-text-stroke:0.45px #fff;left:567.50px;top:1112.00px;">timeZoneId</span>
<span style="font-size:27px;line-height:27px;color:#fff;letter-spacing:0.360px;-webkit-text-stroke:0.45px #fff;left:878.50px;top:1112.00px;">String</span>
<span style="font-size:27px;line-height:27px;color:#fff;-webkit-text-stroke:0.45px #fff;left:1193.05px;top:1112.00px;transform-origin:0 0;transform:scaleX(0.9541);">TIME_ZONE_ID</span>
<span style="font-size:23px;line-height:23px;color:#000;left:585.00px;top:1269.00px;transform-origin:0 0;transform:scaleX(0.9833);">Text</span>
<span style="font-size:23px;line-height:23px;color:#000;letter-spacing:0.271px;left:679.00px;top:1269.00px;">Designer</span>
<span style="font-size:23px;line-height:23px;color:#000;letter-spacing:0.100px;left:823.30px;top:1269.00px;">Indexes</span>
<span style="font-size:27px;line-height:27px;color:#000;left:1546.08px;top:176.00px;transform-origin:0 0;transform:scaleX(0.9580);">Name</span>
<span style="font-size:27px;line-height:27px;color:#000;letter-spacing:0.122px;left:1793.50px;top:174.00px;">timeZoneId</span>
<span style="font-size:27px;line-height:27px;color:#000;letter-spacing:0.377px;left:1548.00px;top:238.00px;">Attribute type</span>
<span style="font-size:27px;line-height:27px;color:#000;left:1791.67px;top:238.00px;transform-origin:0 0;transform:scaleX(0.9172);">DATATYPE</span>
<span style="font-size:27px;line-height:27px;color:#000;left:1547.05px;top:306.00px;transform-origin:0 0;transform:scaleX(0.9491);">Type</span>
<span style="font-size:27px;line-height:27px;color:#000;letter-spacing:0.260px;left:1794.30px;top:306.00px;">String</span>
<span style="font-size:27px;line-height:27px;color:#000;letter-spacing:0.380px;left:1546.00px;top:374.00px;">Length</span>
<span style="font-size:27px;line-height:27px;color:#000;letter-spacing:0.050px;left:1793.00px;top:372.00px;">255</span>
<span style="font-size:27px;line-height:27px;color:#000;letter-spacing:0.262px;left:2111.80px;top:372.00px;">Unlimited</span>
<span style="font-size:27px;line-height:27px;color:#000;left:1547.01px;top:436.00px;transform-origin:0 0;transform:scaleX(0.9929);">Case conversion</span>
<span style="font-size:27px;line-height:27px;color:#000;left:1546.08px;top:496.00px;transform-origin:0 0;transform:scaleX(0.9617);">Read only</span>
<span style="font-size:27px;line-height:27px;color:#000;letter-spacing:0.075px;left:1546.00px;top:550.00px;">Mandatory</span>
<span style="font-size:27px;line-height:27px;color:#000;left:1547.03px;top:604.00px;transform-origin:0 0;transform:scaleX(0.9721);">Transient</span>
<span style="font-size:27px;line-height:27px;color:#000;left:1547.01px;top:662.00px;transform-origin:0 0;transform:scaleX(0.9878);">Column</span>
<span style="font-size:27px;line-height:27px;color:#000;left:1792.55px;top:662.00px;transform-origin:0 0;transform:scaleX(0.9490);">TIME_ZONE_ID</span>
<span style="font-size:27px;line-height:27px;color:#000;letter-spacing:0.194px;left:1547.00px;top:726.00px;">Column definition</span>
<span style="font-size:27px;line-height:27px;color:#000;letter-spacing:0.100px;font-weight:700;left:1548.00px;top:814.00px;">Validation</span>
<span style="font-size:27px;line-height:27px;color:#000;letter-spacing:0.443px;left:1546.00px;top:868.00px;">NotNull:</span>
<span style="font-size:27px;line-height:27px;color:#356fb3;letter-spacing:0.617px;left:1695.30px;top:868.00px;">not set</span>
<span style="font-size:27px;line-height:27px;color:#000;letter-spacing:0.267px;left:1546.00px;top:922.00px;">Length:</span>
<span style="font-size:27px;line-height:27px;color:#356fb3;letter-spacing:0.617px;left:1695.30px;top:922.00px;">not set</span>
<span style="font-size:27px;line-height:27px;color:#000;left:1547.04px;top:976.00px;transform-origin:0 0;transform:scaleX(0.9632);">Size:</span>
<span style="font-size:27px;line-height:27px;color:#356fb3;letter-spacing:0.617px;left:1695.30px;top:976.00px;">not set</span>
<span style="font-size:27px;line-height:27px;color:#000;letter-spacing:0.229px;left:1546.00px;top:1030.00px;">Pattern:</span>
<span style="font-size:27px;line-height:27px;color:#356fb3;letter-spacing:0.617px;left:1695.30px;top:1030.00px;">not set</span>
<span style="font-size:27px;line-height:27px;color:#000;left:1546.05px;top:1084.00px;transform-origin:0 0;transform:scaleX(0.9761);">Email:</span>
<span style="font-size:27px;line-height:27px;color:#356fb3;letter-spacing:0.617px;left:1695.30px;top:1084.00px;">not set</span>
<span style="font-size:27px;line-height:27px;color:#000;letter-spacing:0.325px;left:1546.00px;top:1138.00px;">NotEmpty:</span>
<span style="font-size:27px;line-height:27px;color:#356fb3;letter-spacing:0.617px;left:1695.30px;top:1138.00px;">not set</span>
<span style="font-size:27px;line-height:27px;color:#000;letter-spacing:0.200px;left:1546.00px;top:1192.00px;">NotBlank:</span>
<span style="font-size:27px;line-height:27px;color:#356fb3;letter-spacing:0.617px;left:1695.30px;top:1192.00px;">not set</span>
</div>
</div>
</body></html>
